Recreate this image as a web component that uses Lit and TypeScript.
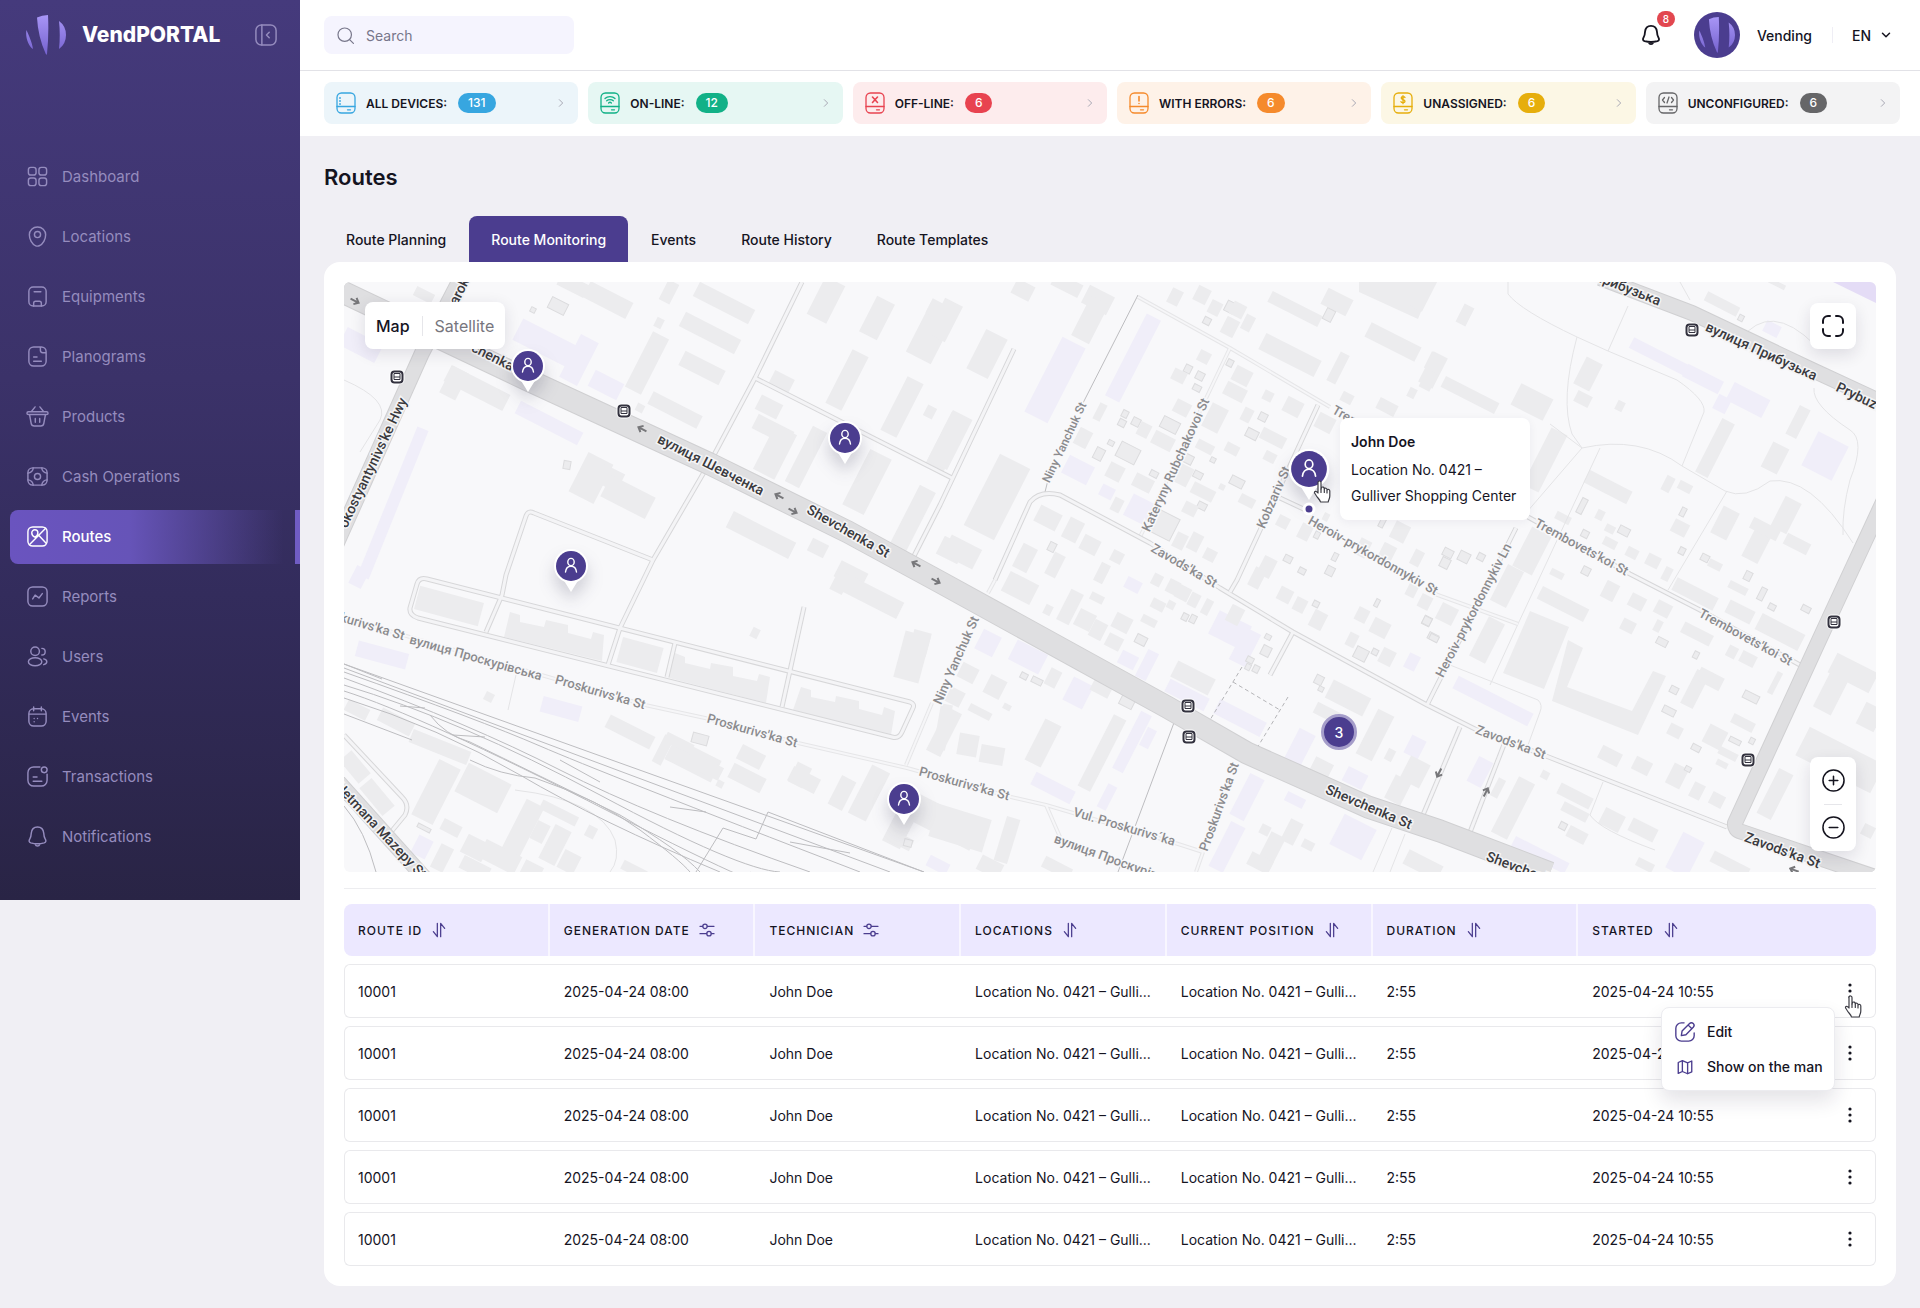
import { LitElement, html, svg, css, nothing } from "lit";
import { customElement, property, state } from "lit/decorators.js";
import { classMap } from "lit/directives/class-map.js";

const FONT = css`Inter, "Liberation Sans", sans-serif`;

const reset = css`
  *, *::before, *::after { box-sizing: border-box; }
  button, input, select { font: inherit; color: inherit; border: 0; background: none; padding: 0; margin: 0; }
  button { cursor: pointer; }
  a { color: inherit; text-decoration: none; }
  svg { display: block; flex: none; }
  .icon { fill: none; stroke: currentColor; stroke-linecap: round; stroke-linejoin: round; }
`;

/* ---------- Icons (24 unit grid) ---------- */

const ICONS: Record<string, unknown> = {
  dashboard: svg`<rect x="2.5" y="2.5" width="8" height="8" rx="2.5"/><rect x="13.5" y="2.5" width="8" height="8" rx="2.5"/><rect x="2.5" y="13.5" width="8" height="8" rx="2.5"/><rect x="13.5" y="13.5" width="8" height="8" rx="2.5"/>`,
  locations: svg`<path d="M3.5 10.2C3.5 5.5 7.3 2 12 2s8.500 3.500 8.500 8.200c0 4.600-2.700 10-6.700 11.500a5 5 0 0 1-3.600 0c-4-1.500-6.700-6.900-6.700-11.500z"/><circle cx="12" cy="10" r="3.200"/>`,
  equipments: svg`<rect x="3" y="2" width="18" height="20" rx="4.500"/><path d="M8.500 7h7M8 22v-3a2 2 0 0 1 2-2h4a2 2 0 0 1 2 2v3"/>`,
  planograms: svg`<path d="M15 2H8a5 5 0 0 0-5 5v10a5 5 0 0 0 5 5h8a5 5 0 0 0 5-5V7a5 5 0 0 0-5-5h-1zM15 2v3.500A2.500 2.500 0 0 0 17.500 8H21M8 12.500h3.500M8 17h8"/>`,
  products: svg`<path d="M2.500 7h19a1 1 0 0 1 0 3h-19a1 1 0 0 1 0-3zM3.700 10l1.700 9.200A3.300 3.300 0 0 0 8.700 22h6.600a3.300 3.300 0 0 0 3.300-2.800L20.300 10M9.700 14v4M14.300 14v4M5.500 7l4-5M18.500 7l-4-5"/>`,
  cash: svg`<rect x="2" y="3" width="20" height="18" rx="5"/><circle cx="12" cy="12" r="3.200"/><path d="M2 8.500c3 0 5.500-2.500 5.500-5.500M22 8.500c-3 0-5.500-2.500-5.500-5.500M2 15.500c3 0 5.500 2.500 5.500 5.500M22 15.500c-3 0-5.500 2.500-5.500 5.500"/>`,
  routes: svg`<rect x="2" y="2" width="20" height="20" rx="5"/><path d="M3.500 20.500l17-17M13.500 11l7.500 8M6 8.200C6 6.400 7.500 5 9.200 5s3.200 1.400 3.200 3.200c0 2-1.200 3.800-3.200 4.500C7.200 12 6 10.200 6 8.200z"/>`,
  reports: svg`<rect x="2" y="2" width="20" height="20" rx="5"/><path d="M7 14.500l2.500-4 4 3L17 9"/>`,
  users: svg`<circle cx="9.500" cy="6.500" r="4.500"/><ellipse cx="9.500" cy="17.500" rx="7" ry="4.200"/><path d="M16.500 3.500a3.500 3.500 0 0 1 0 7M18.500 14.500c2 .5 3.200 1.500 3.200 3s-1.200 2.500-3.200 3"/>`,
  events: svg`<rect x="3" y="4" width="18" height="18" rx="5"/><path d="M3.500 9.500h17M8 2v4M16 2v4M8.500 14h.01M12 14h.01M8.500 17.500h.01"/>`,
  transactions: svg`<path d="M14.500 2H8a6 6 0 0 0-6 6v8a6 6 0 0 0 6 6h8a6 6 0 0 0 6-6V9.500M7.500 12.500h4M7.500 17h9"/><circle cx="19" cy="5" r="3"/>`,
  bell: svg`<path d="M12 2C8 2 5.800 4.800 5.500 8.500 5.300 12 5 13 4 14.500c-1.300 2-.9 3.600 1 4.200 4.500 1.200 9.500 1.200 14 0 1.900-.6 2.300-2.200 1-4.200-1-1.500-1.300-2.500-1.500-6C18.200 4.800 16 2 12 2zM9.500 20c.5 1.300 1.400 2 2.500 2s2-.7 2.500-2"/>`,
  collapse: svg`<rect x="1" y="1" width="22" height="22" rx="6"/><path d="M7.500 1v22M15.500 9l-3 3 3 3"/>`,
  search: svg`<circle cx="11" cy="11" r="8.500"/><path d="M17.500 17.500L22 22"/>`,
  chevronDown: svg`<path d="M5 8.500l7 7 7-7"/>`,
  chevronRight: svg`<path d="M8 4l8 8-8 8"/>`,
  sort: svg`<path d="M9.500 2v20L3.500 14.500M14.500 22V2l6 7.500"/>`,
  filter: svg`<circle cx="9" cy="6.500" r="3.300"/><circle cx="15" cy="17.500" r="3.300"/><path d="M1.500 6.500h4M12.500 6.500h10M1.500 17.500h10M18.500 17.500h4"/>`,
  expand: svg`<path d="M2 9V7a5 5 0 0 1 5-5h2M15 2h2a5 5 0 0 1 5 5v2M22 15v2a5 5 0 0 1-5 5h-2M9 22H7a5 5 0 0 1-5-5v-2"/>`,
  plus: svg`<circle cx="12" cy="12" r="11"/><path d="M12 7.500v9M7.500 12h9"/>`,
  minus: svg`<circle cx="12" cy="12" r="11"/><path d="M7.500 12h9"/>`,
  edit: svg`<path d="M11 2H8a6 6 0 0 0-6 6v8a6 6 0 0 0 6 6h8a6 6 0 0 0 6-6v-3M8 16l.8-5L17 2.700a2.800 2.800 0 0 1 4 4L13 15zM15.500 4.500l3.800 3.800"/>`,
  map: svg`<path d="M8.500 3.500L3 6v14.500l5.500-2.500 7 3L21 18.500V4l-5.500 2.500zM8.500 3.500V18M15.500 6.500V21"/>`,
};

const icon = (name: string, size: number, stroke = 1.5) => html`
  <svg class="icon" width=${size} height=${size} viewBox="0 0 24 24" stroke-width=${stroke} aria-hidden="true">${ICONS[name]}</svg>`;

const brandMark = (size: number, id: string) => html`
  <svg width=${size} height=${size} viewBox="0 0 40 40" aria-hidden="true">
    <defs><linearGradient id=${id} x1="0" y1="0" x2="0" y2="1"><stop offset="0" stop-color="#a896f6"/><stop offset="1" stop-color="#7562cf"/></linearGradient></defs>
    <path fill="url(#${id})" d="M.5 15C2.500 20 6 27 7 34 2.500 31-1 22 .5 15zM11 2.500Q16 0 22 0q1 20-1 39-.5 1.500-1.200 0Q12 22 11 2.500zM33 6q7 5 7 14 0 9-7 14 1.500-14 0-28z"/>
  </svg>`;

const handCursor = (cls: string) => html`
  <svg class=${cls} width="20" height="24" viewBox="0 0 20 24" aria-hidden="true">
    <path d="M5 2.500c0-2 3-2 3 0V9l.5-1.500c1-1 2.800-.3 2.800 1.200.8-1 2.700-.6 2.800 1 1-.8 2.700-.3 2.700 1.300v5c0 3-1.300 3.500-1.600 6H7.500c-.5-2.500-3-4-4.300-6.500C2.500 14 1 13 1.500 12c.8-1.200 2.300-.5 3.500 1z" fill="#fff" stroke="#3c3c44" stroke-width="1.200" stroke-linejoin="round"/>
    <path d="M8 9v3.500M11.300 9v3.500M14 10v3" stroke="#3c3c44" stroke-width="1.200" stroke-linecap="round"/>
  </svg>`;

/* ---------- Side navigation ---------- */

const NAV = [
  ["Dashboard", "dashboard"], ["Locations", "locations"], ["Equipments", "equipments"], ["Planograms", "planograms"],
  ["Products", "products"], ["Cash Operations", "cash"], ["Routes", "routes"], ["Reports", "reports"],
  ["Users", "users"], ["Events", "events"], ["Transactions", "transactions"], ["Notifications", "bell"],
];

@customElement("side-nav")
export class SideNav extends LitElement {
  static styles = [reset, css`
    :host { display: block; background: linear-gradient(180deg, #453a7c 0%, #3b3269 42%, #332c5c 66%, #292445 100%); color: #958cbe; padding-bottom: 36px; }
    .brand { display: flex; align-items: center; height: 70px; padding: 0 23px 0 26px; gap: 16px; margin-bottom: 80px; }
    .name { flex: 1; color: #fff; font-size: 21px; font-weight: 800; line-height: 24px; }
    .list { list-style: none; margin: 0; padding: 0; display: flex; flex-direction: column; gap: 6px; }
    .link { display: flex; align-items: center; gap: 13px; height: 54px; margin-left: 10px; padding: 0 0 2px 16px; font-size: 15px; font-weight: 400; }
    .active { color: #fff; font-weight: 500; border-right: 5px solid #705cc4; border-radius: 8px 0 0 8px;
      background: linear-gradient(90deg, #6a54bf 0%, #6654b8 42%, rgb(102 84 184 / 0) 96%); }
  `];
  render() {
    return html`
      <div class="brand">
        ${brandMark(40, "side-mark")}
        <span class="name">VendPORTAL</span>
        <button aria-label="Collapse menu">${icon("collapse", 22, 1.6)}</button>
      </div>
      <nav><ul class="list">
        ${NAV.map(([label, name]) => html`<li>
          <a class=${classMap({ link: true, active: label === "Routes" })} href="#${name}">${icon(name, 23)}<span>${label}</span></a>
        </li>`)}
      </ul></nav>`;
  }
}

/* ---------- Top bar ---------- */

@customElement("top-bar")
export class TopBar extends LitElement {
  static styles = [reset, css`
    :host { display: flex; justify-content: space-between; align-items: center; height: 71px; padding: 0 28px 0 24px; background: #fff; border-bottom: 1px solid #e2e2e7; }
    .search { display: flex; align-items: center; gap: 11px; width: 250px; height: 38px; padding: 0 12px; border-radius: 8px; background: #f5f4fe; color: #77768a; }
    .field { flex: 1; min-width: 0; font-size: 14px; outline: 0; }
    .field::placeholder { color: #77768a; opacity: 1; }
    .right { display: flex; align-items: center; font-size: 14px; font-weight: 500; color: #15141f; }
    .bell { position: relative; margin-right: 32px; }
    .count { position: absolute; left: 17px; top: -13px; min-width: 18px; height: 16px; border-radius: 8px; background: #e2474f; color: #fff; font-size: 10px; line-height: 16px; text-align: center; }
    .avatar { display: grid; place-items: center; width: 46px; height: 46px; border-radius: 50%; background: #4b3d8f; }
    .user { margin: 0 20px 0 17px; }
    .lang { position: relative; display: flex; align-items: center; border-left: 1px solid #efeef5; padding-left: 19px; height: 16px; }
    .select { appearance: none; width: 40px; outline: 0; cursor: pointer; }
    .arrow { position: absolute; right: 0; pointer-events: none; }
  `];
  render() {
    return html`
      <label class="search">${icon("search", 19)}<input class="field" type="search" placeholder="Search" aria-label="Search" /></label>
      <div class="right">
        <button class="bell" aria-label="Notifications, 8 new">${icon("bell", 22, 2)}<span class="count">8</span></button>
        <span class="avatar">${brandMark(36, "avatar-mark")}</span>
        <span class="user">Vending</span>
        <div class="lang">
          <select class="select" aria-label="Language"><option>EN</option></select>
          <span class="arrow">${icon("chevronDown", 12, 3)}</span>
        </div>
      </div>`;
  }
}

/* ---------- Device status strip ---------- */

const GLYPHS: Record<string, unknown> = {
  all: svg`<path d="M4 6h.01M4 9h.01M4 12h.01" stroke-width="1.800"/>`,
  online: svg`<path d="M5 6.500c2.500-2.500 7.500-2.500 10 0M6.700 8.800c1.700-1.600 4.900-1.600 6.600 0M8.600 11c.8-.8 2-.8 2.800 0"/>`,
  offline: svg`<path d="M7.500 5l5 5.500M12.500 5l-5 5.500" stroke-width="1.600"/>`,
  errors: svg`<path d="M10 4.500v4.500M10 11.500h.01" stroke-width="1.600"/>`,
  unassigned: svg`<path d="M12 5.500c-.5-1-3.800-1.200-3.800.5S12 7.500 12 9.300s-3.500 1.700-4 .4M10 3.700v8"/>`,
  unconfigured: svg`<path d="M6.500 5.500L4.500 8l2 2.500M13.500 5.500l2 2.500-2 2.500M11 5l-2 6"/>`,
};

const STATUSES = [
  { id: "all", label: "All devices:", count: 131 },
  { id: "online", label: "On-line:", count: 12 },
  { id: "offline", label: "Off-line:", count: 6 },
  { id: "errors", label: "With errors:", count: 6 },
  { id: "unassigned", label: "Unassigned:", count: 6 },
  { id: "unconfigured", label: "Unconfigured:", count: 6 },
];

@customElement("status-strip")
export class StatusStrip extends LitElement {
  static styles = [reset, css`
    :host { display: grid; grid-template-columns: repeat(6, 1fr); gap: 10px; padding: 11px 20px 12px 24px; background: #fff; }
    .card { display: flex; align-items: center; height: 42px; padding: 0 12px; border-radius: 8px; background: var(--tint); color: var(--tone); }
    .label { margin: 0 11px 0 10px; color: #15141f; font-size: 12px; font-weight: 600; text-transform: uppercase; white-space: nowrap; }
    .count { padding: 0 10px; height: 20px; border-radius: 10px; background: var(--tone); color: #fff; font-size: 12px; font-weight: 500; line-height: 20px; }
    .go { margin-left: auto; color: #a9a9b5; }
    .all { --tone: #37a6e0; --tint: #ecf5fa; }
    .online { --tone: #12b187; --tint: #e6f7f3; }
    .offline { --tone: #e84350; --tint: #fdeced; }
    .errors { --tone: #f58a2c; --tint: #fef2e8; }
    .unassigned { --tone: #e6ae0c; --tint: #fcf7e5; }
    .unconfigured { --tone: #666668; --tint: #f3f3f4; }
  `];
  render() {
    return STATUSES.map((s) => html`
      <a class="card ${s.id}" href="#${s.id}">
        <svg class="icon" width="20" height="22" viewBox="0 0 20 22" stroke-width="1.300" aria-hidden="true">
          <rect x="1" y="1" width="18" height="20" rx="4.500"/><path d="M1 14.500h18M11.500 17.800h3"/>${GLYPHS[s.id]}
        </svg>
        <span class="label">${s.label}</span><span class="count">${s.count}</span>
        <span class="go">${icon("chevronRight", 10, 2.4)}</span>
      </a>`);
  }
}

/* ---------- Map ---------- */

const VIEW = { x: 344, y: 282, w: 1532, h: 590 };

type Block = number[]; // centre x, centre y, width, depth, angle (27 when absent), outlined
interface Tile { x: number; y: number; sx: number; sy: number; grey: Block[]; lilac: Block[]; shapes?: string[] }

const TILES: Tile[] = [
  { x: 320, y: 270, sx: 2.45, sy: 3,
    grey: [[705,90,48,18],[620,45,30,14],[582,108,18,12,27,1],[990,100,62,16],[955,190,62,16],[935,295,45,16],[855,65,12,22],[800,280,18,62],[870,420,55,14],[1240,90,22,42],[1365,145,20,40],[1497,190,28,56],[1515,120,20,16],[1290,330,18,60],[1425,410,18,60],[1535,520,20,60],[1115,545,24,50],[1110,480,40,16],[1190,560,16,62],[1340,635,24,62],[1450,750,18,70],[1130,340,22,18],[1100,410,24,16],[1495,425,10,12],[1080,795,70,18],[1220,835,18,14],[1545,840,24,20],[1300,915,30,18],[665,625,28,44],[710,625,24,20],[755,680,50,24],[385,355,66,18],[328,340,18,30],[605,585,7,8,10,1],[521,120,5,5,27,1],[830,160,8,10],[255,75,20,10],[785,415,8,8]],
    lilac: [[560,225,70,24],[635,270,20,48],[700,345,32,18],[560,460,70,14],[180,700,12,160,22],[100,225,40,20]] },
  { x: 320, y: 570, sx: 2.45, sy: 3,
    grey: [[315,108,66,24,15],[785,255,42,26,15],[760,487,50,14],[1345,75,70,18],[1275,40,14,20],[1450,260,26,48,15],[1470,220,18,24,15],[1065,190,8,10],[415,380,9,9],[90,420,24,12],[185,455,36,14],[295,530,62,14,22],[285,665,24,62],[400,655,48,32],[495,780,20,60],[440,860,40,20],[585,730,40,10],[540,785,14,20],[575,825,18,38],[665,785,10,12],[320,775,20,12],[380,835,24,20],[300,865,14,26],[610,875,18,20],[915,570,52,24],[840,540,10,30],[880,520,30,10],[960,600,20,14],[1055,562,26,16],[1045,625,36,16],[1185,630,30,16],[1175,615,16,22],[1280,670,16,32],[1345,670,20,54],[1520,750,80,28],[1420,770,20,40],[1530,485,16,48],[932,507,16,10,15,1],[255,775,14,4,27,1],[980,643,7,7],[520,900,20,14],[380,895,30,14],[140,680,16,36,-40],[85,590,16,30,-40],[770,900,26,10],[1420,810,26,12],[1440,820,8,7,15,1]],
    lilac: [[153,255,52,16,15],[590,418,40,16,15],[95,20,14,20],[1515,885,22,12],[250,830,16,20]],
    shapes: ["465,125 490,135 490,155 550,170 553,150 607,165 607,190 665,208 670,185 697,195 690,272 450,200",
      "870,250 895,260 895,280 955,297 958,278 1012,292 1012,317 1070,333 1075,312 1102,322 1092,400 855,325",
      "1178,350 1203,360 1203,380 1262,397 1265,378 1320,392 1320,417 1378,435 1383,412 1408,422 1400,495 1160,420"] },
  { x: 940, y: 270, sx: 3, sy: 3,
    grey: [[250,60,20,16],[380,45,30,14],[475,90,28,20],[450,150,20,44],[140,252,24,44],[15,150,20,40],[30,510,22,56],[170,680,34,80],[65,845,34,22],[705,80,12,16],[785,75,14,16],[825,115,12,14],[870,110,9,11,27,1],[895,120,14,14],[802,152,7,7,27,1],[870,170,14,18],[925,160,10,16],[1065,118,56,12],[1190,95,28,18],[1167,135,9,12,27,1],[1050,255,62,18],[1195,295,10,32],[1360,215,56,16],[1480,300,16,34],[792,260,12,12],[745,297,7,8,27,1],[780,318,8,8,27,1],[718,318,14,12],[771,353,8,6,27,1],[870,278,6,7,27,1],[905,318,18,16],[885,365,22,14],[985,378,10,10],[1058,410,18,16],[922,435,10,14],[968,440,8,8,27,1],[825,445,18,26],[727,415,16,14],[690,466,18,12,27,1],[612,480,12,14],[587,457,8,8,27,1],[556,432,6,7,27,1],[546,460,7,7,27,1],[480,425,8,18],[430,505,14,18],[512,520,6,5,27,1],[565,550,21,16,27,1],[478,553,9,12,27,1],[670,512,22,14],[745,567,10,9,27,1],[795,532,18,10],[820,571,5,5,27,1],[935,493,12,9,27,1],[1000,505,26,12],[990,562,12,10],[875,537,14,10],[525,605,16,16],[610,640,20,14],[643,612,8,6,27,1],[730,615,16,20],[775,614,9,7,27,1],[890,635,14,9,27,1],[790,665,24,12],[785,707,9,7,27,1],[920,692,16,10],[750,718,14,12],[530,705,10,14],[673,765,24,24,27,1],[720,812,12,16],[765,815,12,18],[810,855,12,12],[325,745,24,18],[400,780,16,22],[450,825,18,16],[337,830,7,9,27,1],[255,865,16,26],[345,885,12,24],[530,860,12,12],[485,910,10,20],[1030,755,12,12],[980,890,14,20],[1045,867,8,7,27,1],[1085,903,7,6,27,1],[1130,795,5,7,27,1],[1185,862,5,8,27,1],[1170,903,8,9,27,1],[1270,835,12,18],[1340,850,14,18],[1430,865,10,16],[1380,785,16,18],[1327,760,5,9,27,1],[1158,740,6,8],[1095,785,12,16],[1220,385,12,10],[1340,410,20,12],[1415,370,8,10],[1155,460,18,16],[845,650,6,6]],
    lilac: [[345,330,26,84],[580,265,16,92],[415,600,28,20],[600,720,26,24],[500,665,14,12]],
    shapes: ["1256,37 1480,37 1435,148 1256,65"] },
  { x: 940, y: 570, sx: 3, sy: 3,
    grey: [[240,55,32,22],[390,110,14,34],[435,150,18,18],[475,180,14,18],[523,215,16,14],[545,160,18,16],[325,120,8,10],[470,85,14,8],[485,15,8,14],[650,30,10,12],[653,105,14,10],[700,50,12,14],[730,70,14,14],[762,90,10,14],[800,110,8,16],[693,105,8,8],[735,140,6,7,27,1],[758,147,6,8,27,1],[628,153,16,8],[603,210,11,9,27,1],[760,325,42,18],[1035,75,14,14],[1080,105,12,14],[1127,103,6,6,27,1],[1135,150,14,18],[950,25,12,20],[885,135,14,18],[983,200,6,5,27,1],[978,243,9,10,27,1],[930,270,7,6,27,1],[947,298,6,7,27,1],[924,292,5,6,27,1],[1235,210,10,14],[1320,175,18,16],[1262,253,13,12,27,1],[1305,245,6,6,27,1],[1340,260,14,16],[1310,98,4,8,27,1],[1460,152,8,9,27,1],[1480,202,10,7,27,1],[1265,135,12,14],[1415,60,10,14],[1455,95,12,14],[1138,330,8,9,27,1],[1143,358,5,5,27,1],[1225,385,42,20],[1160,430,26,12],[1305,495,18,50],[1350,555,8,12],[1145,590,20,14],[1425,605,22,26],[1375,660,18,26],[85,310,18,16],[165,350,18,20],[252,318,7,6,27,1],[290,333,11,6,27,1],[340,325,12,18],[485,350,20,16],[562,397,14,10,27,1],[120,425,24,8],[200,410,8,6],[45,380,16,16],[10,470,12,46,10],[85,525,20,22,10],[155,555,24,18,10],[310,520,18,46],[485,550,14,80],[60,775,56,34,17],[200,810,14,46,17],[150,890,24,16],[350,895,30,12],[975,780,10,10],[1055,785,14,24],[1105,825,12,9],[992,840,16,34],[960,880,24,14],[1450,885,38,16]],
    lilac: [[145,220,20,22],[265,260,34,22],[415,370,22,26],[565,270,18,14],[620,285,12,30],[740,375,44,14],[900,445,52,16],[870,180,36,26],[915,230,18,36],[580,45,16,12],[575,515,12,64],[340,655,44,14],[1080,530,18,34],[920,680,16,46],[1245,625,22,16],[1065,690,20,10],[1240,800,36,34],[860,830,16,50],[1425,530,16,20],[500,680,10,26],[1415,275,12,16],[625,505,10,20]] },
  { x: 1420, y: 270, sx: 3, sy: 2.529,
    grey: [[135,115,11,20],[45,235,16,18],[25,280,12,18],[150,315,60,12],[335,335,36,24],[10,55,16,36],[505,262,18,30],[490,325,16,12],[600,343,8,10],[375,480,18,64],[885,450,14,60],[1135,385,12,32],[1065,475,18,28],[905,85,36,10],[963,122,5,6,27,1],[565,550,48,14],[487,598,6,16,27,1],[745,540,9,16],[795,550,14,9],[780,652,16,14],[788,612,5,9,27,1],[785,710,6,7,27,1],[613,660,11,8,27,1],[540,620,8,10],[570,655,10,8],[495,668,7,7,27,1],[570,690,14,9],[430,628,16,8],[635,715,12,10],[700,735,14,12],[740,770,8,14],[855,728,8,7,27,1],[885,745,14,8],[915,640,18,30],[1015,690,18,38],[1035,655,30,12],[1098,620,18,34],[1130,692,26,12],[985,775,7,9,27,1],[955,805,20,8],[1025,820,6,13,27,1],[1057,853,7,6,27,1],[1157,858,9,6,27,1],[430,845,52,14],[410,770,14,7],[497,762,8,8,27,1],[570,812,14,18],[650,840,16,14],[730,858,16,14],[625,900,14,12],[715,900,7,12],[725,940,11,7,27,1],[825,820,46,14],[960,865,28,14],[1080,915,48,18],[830,920,32,12],[935,965,10,12],[985,985,16,12],[828,973,5,7,27,1],[260,800,18,40],[335,710,22,44],[200,935,18,44],[133,727,11,10,27,1],[85,715,10,8,27,1],[75,742,9,10,27,1],[183,725,7,7,27,1],[80,870,18,18],[20,887,8,8,27,1],[42,930,9,6,27,1],[825,1060,14,38],[870,1035,26,14],[763,1063,8,7,27,1],[748,1115,13,7,27,1],[993,1080,16,8,27,1],[1065,1045,6,24],[765,1165,14,12],[827,1210,9,6,27,1],[945,1190,12,5,27,1],[997,1190,5,6,27,1],[885,1180,20,20],[970,1145,24,10],[925,1225,20,8],[905,1250,12,6],[570,1230,22,14],[665,1255,18,14],[770,1280,16,22],[803,1262,6,5,27,1],[830,1318,12,16],[890,1340,14,13],[575,1390,22,18],[670,1415,28,14],[465,1330,36,12],[465,1370,28,10],[428,1407,7,7,27,1],[470,1430,20,12],[280,1360,18,62],[235,1310,8,20],[375,1277,8,8],[1065,1325,16,50],[1300,1020,46,22],[1245,1050,20,58],[1350,1130,20,24],[1260,1240,84,32],[930,1505,40,12],[675,1505,18,9],[1345,1420,12,12],[1070,35,18,5]],
    lilac: [[720,220,64,12],[850,275,40,14],[985,330,40,20],[905,340,14,16],[1215,470,34,38],[220,1090,84,14],[360,1480,60,12],[795,1480,24,40],[180,1270,16,28],[1055,150,16,12]],
    shapes: ["330,862 447,903 373,1060 248,1020", "445,935 490,955 440,1055 635,1115 700,1015 738,1028 655,1175 395,1090"] },
];

const MINOR_ROADS = [
  "M802 282L755 378L714 455L653 560L620 628L608 665", "M755 378L952 478", "M1014 349L940 505L914 556",
  "M486 632L502 595L506 575L526 516Q528 510 534 513L653 560",
  "M427 579L910 702Q915 704 913 708L902 732Q899 739 892 737L418 618Q409 615 410 608L417 584Q419 577 427 579z",
  "M675 643L667 677", "M804 607L782 707",
  "M995 580L1030 502Q1040 490 1060 495L1150 543L1220 588L1293 632L1427 705L1475 729L1546 756L1727 827",
  "M344 735L402 797Q410 805 405 815L391 832", "M1318 405L1237 580L1230 592", "M1280 498L1310 512",
  "M1427 705L1516 528", "M1528 517L1630 574L1700 610L1800 665", "M1460 727L1420 822", "M1505 742L1467 840", "M1293 632L1270 675",
];
const FAINT_ROADS = [
  "M344 618L645 705L705 718L798 743L907 768L1011 797L1046 805L1175 843L1203 852", "M1203 852L1196 872", "M1237 760L1240 750",
  "M988 593L995 580M980 615L978 611M932 703L906 765", "M1138 297L1230 348L1330 407", "M1230 348L1140 537", "M1046 805L1060 837",
  "M1435 594L1518 624",
];
const PATHS = [
  "M1508 282v12Q1520 310 1577 337L1608 351L1677 380Q1706 400 1704 412L1682 466", "M1577 337Q1560 400 1572 434L1582 448L1520 520",
  "M1582 448Q1640 435 1682 466L1725 491Q1745 500 1770 481Q1810 475 1853 543", "M1814 388Q1812 405 1850 430Q1866 440 1850 480Q1842 510 1843 535",
  "M1628 306L1608 351", "M1727 491L1668 590", "M1518 624L1490 685", "M1450 665L1538 700Q1543 705 1540 712L1528 745", "M1603 782L1590 815Q1600 830 1655 850",
  "M1550 424L1582 448M1600 448L1518 624", "M515 790Q600 800 615 840Q620 860 610 872", "M344 380Q390 400 380 420L360 452", "M1690 300L1680 282M1740 340Q1770 300 1815 345",
  "M516 675L508 710", "M1392 828L1373 872M1405 834L1390 872",
];
const RAILS = [
  "M344 664L924 872", "M344 668L890 872", "M344 672Q480 720 540 746T860 872", "M344 678Q470 724 560 770T810 872", "M344 685Q460 720 600 795T780 872",
  "M344 691Q420 715 610 812T750 872", "M344 698Q440 728 520 775T720 872", "M430 715Q445 735 470 742L620 815Q680 850 700 872", "M344 714L412 740M470 760Q500 775 535 778Q600 800 640 830T690 872",
  "M344 664L382 679M400 706L425 708M453 735L485 737M560 760L600 782M670 807L706 812M790 842L850 853", "M696 872L723 828L756 839L768 812L924 872",
  "M1138 295L1083 403M1051 468L1045 492", "M1175 720L1118 872", "M344 806Q365 830 376 872",
];

type Label = [string, number, number, number, number, string?];
const LABELS: Label[] = [
  ["arok", 453, 303, 465, 279, "major"], ["okostyantynivs'ke Hwy", 342, 527, 403, 398, "major"], ["chenka", 474, 347, 512, 366, "major"],
  ["вулиця Шевченка", 661, 439, 761, 490, "major"], ["Shevchenka St", 808, 508, 889, 554, "major"], ["Shevchenka St", 1328, 789, 1410, 824, "major"],
  ["Shevchenka", 1488, 856, 1557, 882, "major"], ["Hetmana Mazepy St", 338, 784, 424, 876, "major"], ["вулиця Прибузька", 1709, 327, 1814, 375, "major"],
  ["Прибузька", 1595, 275, 1660, 301, "major"], ["Prybuz'ka", 1837, 386, 1892, 412, "major"], ["Zavods'ka St", 1747, 837, 1818, 863, "major"],
  ["Proskurivs'ka St", 314, 608, 406, 636], ["вулиця Проскурівська", 409, 638, 543, 676], ["Proskurivs'ka St", 554, 678, 647, 705],
  ["Proskurivs'ka St", 706, 717, 799, 743], ["Proskurivs'ka St", 918, 770, 1011, 796], ["Vul. Proskurivs´ka", 1074, 811, 1175, 841],
  ["вулиця Проскурівська", 1056, 838, 1183, 884], ["Niny Yanchuk St", 936, 704, 975, 616], ["Niny Yanchuk St", 1046, 479, 1081, 405, "small"],
  ["Kateryny Rubchakovoi St", 1146, 528, 1204, 401], ["Kobzariv St", 1259, 529, 1287, 465], ["Zavods'ka St", 1152, 546, 1217, 584],
  ["Trembovets'koi St", 1333, 408, 1425, 460], ["Heroiv-prykordonnykiv St", 1308, 518, 1439, 592], ["Heroiv-prykordonnykiv Ln", 1437, 679, 1509, 541],
  ["Trembovets'koi St", 1535, 521, 1629, 572], ["Trembovets'koi St", 1699, 611, 1793, 662], ["Zavods'ka St", 1475, 728, 1547, 755], ["Proskurivs'ka St", 1202, 852, 1235, 761],
];

const STOPS = [[397, 377], [624, 411], [1188, 706], [1189, 737], [1692, 330], [1834, 622], [1748, 760]];
const ARROWS = [[355, 301, 27], [642, 429, 207], [779, 496, 207], [793, 511, 27], [916, 564, 207], [936, 581, 27], [1439, 773, 117], [1486, 792, -63], [1794, 870, 200]];
const PINS = [[528, 366], [845, 438], [571, 566], [904, 799]];

const at = (x: number, y: number) => `left:${((x - VIEW.x) / VIEW.w) * 100}%;top:${((y - VIEW.y) / VIEW.h) * 100}%`;

@customElement("route-map")
export class RouteMap extends LitElement {
  @state() private layer = "Map";
  static styles = [reset, css`
    :host { display: block; position: relative; overflow: hidden; border-radius: 6px; background: #f8f8fa; aspect-ratio: 1532 / 590; font-size: 14px; color: #15141f; }
    .canvas { width: 100%; height: 100%; }
    .grey { fill: #ececee; }
    .outlined { stroke: #dcdcde; stroke-width: 1; }
    .lilac { fill: #f0eef9; }
    .line { fill: none; stroke-linejoin: round; }
    .major-edge { stroke: #d0d0d2; stroke-width: 23; }
    .major-fill { stroke: #dfdfe1; stroke-width: 21; }
    .mid-edge { stroke: #d0d0d2; stroke-width: 16; }
    .mid-fill { stroke: #dfdfe1; stroke-width: 14; }
    .minor-edge { stroke: #d7d7d9; stroke-width: 5; }
    .minor-fill { stroke: #f4f4f6; stroke-width: 3; }
    .faint-edge { stroke: #e6e6e8; stroke-width: 4; }
    .faint-fill { stroke: #f6f6f8; stroke-width: 2; }
    .path { stroke: #e4e4e6; }
    .rail { stroke: #bdbdc0; }
    .dash { stroke: #b5b5b8; stroke-dasharray: 4 3; }
    .street { font-family: Roboto, "Noto Sans", sans-serif; font-size: 13px; font-weight: 500; fill: #8b8b8e; stroke: #f8f8fa; stroke-width: 3; paint-order: stroke; text-anchor: middle; }
    .major { font-size: 14px; fill: #3a3a3e; stroke: #f4f4f5; }
    .small { font-size: 12px; }
    .arrow { fill: none; stroke: #77777a; stroke-width: 2; }
    .layers { position: absolute; left: 21px; top: 20px; display: flex; align-items: center; height: 47px; padding: 0 11px; border-radius: 8px; background: #fff; box-shadow: 0 4px 16px rgb(30 25 60 / .12); font-size: 16px; color: #77767e; }
    .layer + .layer { border-left: 1px solid #e6e6ea; margin-left: 12px; padding-left: 12px; }
    .chosen { color: #15141f; font-weight: 500; }
    .box { position: absolute; right: 20px; width: 46px; border-radius: 8px; background: #fff; box-shadow: 0 6px 16px rgb(30 25 60 / .12); display: flex; flex-direction: column; align-items: center; }
    .full { top: 21px; height: 46px; justify-content: center; }
    .zoom { bottom: 21px; height: 94px; justify-content: space-evenly; }
    .rule { width: 18px; height: 1px; background: #e6e6ea; }
    .pin { position: absolute; transform: translate(-50%, -50%); filter: drop-shadow(0 10px 8px rgb(30 25 60 / .18)); }
    .cluster { position: absolute; transform: translate(-50%, -50%); width: 36px; height: 36px; border-radius: 50%; border: 3px solid #a59dca; background: #4b3d8f; color: #fff; font-weight: 500; }
    .dot { position: absolute; transform: translate(-50%, -50%); width: 13px; height: 13px; border-radius: 50%; border: 3px solid #fff; background: #4b3d8f; }
    .tip { position: absolute; width: 190px; padding: 11px; border-radius: 8px; background: #fff; box-shadow: 0 2px 10px rgb(30 25 60 / .06); line-height: 26px; }
    .tip strong { display: block; margin-bottom: 2px; font-weight: 600; }
    .hand { position: absolute; }
  `];

  private block(b: Block, t: Tile, cls: string) {
    const [cx, cy, w, h, angle = 27, outlined] = b;
    const x = Math.round(t.x + cx / t.sx), y = Math.round(t.y + cy / t.sy);
    return svg`<rect class="${cls} ${outlined ? "outlined" : ""}" x=${x - w / 2} y=${y - h / 2} width=${w} height=${h} transform="rotate(${angle} ${x} ${y})"/>`;
  }
  private shape(points: string, t: Tile) {
    const list = points.split(" ").map((p) => { const [x, y] = p.split(",").map(Number); return `${Math.round(t.x + x / t.sx)},${Math.round(t.y + y / t.sy)}`; });
    return svg`<polygon class="grey" points=${list.join(" ")}/>`;
  }
  private lines(cls: string, ...ds: string[]) { return ds.map((d) => svg`<path class="line ${cls}" d=${d}/>`); }
  private label([text, x1, y1, x2, y2, cls = ""]: Label) {
    const x = (x1 + x2) / 2, y = (y1 + y2) / 2, a = (Math.atan2(y2 - y1, x2 - x1) * 180) / Math.PI;
    return svg`<text class="street ${cls}" x=${x} y=${y} dy="5" transform="rotate(${a.toFixed(1)} ${x} ${y})">${text}</text>`;
  }
  private pin(x: number, y: number, size: number) {
    return html`<button class="pin" style=${at(x, y)} aria-label="Technician">
      <svg width=${size} height=${size} viewBox="-26 -26 52 52" aria-hidden="true">
        <path d="M-8 13L0 26L8 13z" fill="#fff"/><circle r="17" fill="#fff"/><circle r="15" fill="#4b3d8f"/>
        <g fill="none" stroke="#fff" stroke-width="1.400" stroke-linecap="round"><ellipse cy="-4" rx="3.200" ry="3.600"/><path d="M-5.500 6C-5 1.500-2.500.2 0 .2S5 1.500 5.500 6"/></g>
      </svg></button>`;
  }

  render() {
    const shevchenka = "M330 286L528 380L710 464L848 532L940 582L1167 707L1247 753L1368 807L1440 831L1550 873";
    const mid = ["M464 272L422 353L336 545", "M1600 278L1692 313L1808 368L1890 406", "M1884 500L1833 610L1735 823Q1734 830 1742 832L1890 882", "M334 777L430 884"];
    return html`
      <svg class="canvas" viewBox="${VIEW.x} ${VIEW.y} ${VIEW.w} ${VIEW.h}" preserveAspectRatio="xMidYMid slice" role="img" aria-label="Street map">
        <polygon points="1833,282 1876,303 1876,282" fill="#e4dcf6"/>
        ${TILES.map((t) => svg`${t.lilac.map((b) => this.block(b, t, "lilac"))}${t.grey.map((b) => this.block(b, t, "grey"))}${(t.shapes ?? []).map((s) => this.shape(s, t))}`)}
        ${this.lines("path", ...PATHS)}${this.lines("rail", ...RAILS)}
        ${this.lines("dash", "M1242 667L1210 720", "M1233 682L1280 710", "M1288 697L1257 748")}
        ${this.lines("faint-edge", ...FAINT_ROADS)}${this.lines("faint-fill", ...FAINT_ROADS)}
        ${this.lines("minor-edge", ...MINOR_ROADS)}${this.lines("minor-fill", ...MINOR_ROADS)}
        ${this.lines("mid-edge", ...mid)}${this.lines("major-edge", shevchenka)}${this.lines("mid-fill", ...mid)}${this.lines("major-fill", shevchenka)}
        ${ARROWS.map(([x, y, a]) => svg`<path class="arrow" transform="translate(${x} ${y}) rotate(${a})" d="M-5 0H4M0-3.500L4 0L0 3.500"/>`)}
        ${LABELS.map((l) => this.label(l))}
        ${STOPS.map(([x, y]) => svg`<g transform="translate(${x} ${y})"><rect x="-7.500" y="-7.500" width="15" height="15" rx="5" fill="#fff"/><rect x="-5.500" y="-5.500" width="11" height="11" rx="3" fill="#fff" stroke="#33323f" stroke-width="2"/><path d="M-3-3.500h6v6h-6zM-3 0h6" fill="none" stroke="#33323f"/></g>`)}
      </svg>
      ${PINS.map(([x, y]) => this.pin(x, y, 52))}
      ${this.pin(1309, 469, 62)}
      <span class="dot" style=${at(1309, 509)}></span>
      <button class="cluster" style=${at(1339, 732)}>3</button>
      <div class="tip" role="tooltip" style=${at(1340, 418)}><strong>John Doe</strong>Location No. 0421 – Gulliver Shopping Center</div>
      <span class="hand" style=${at(1313, 480)}>${handCursor("")}</span>
      <div class="layers">
        ${["Map", "Satellite"].map((n) => html`<button class=${classMap({ layer: true, chosen: n === this.layer })} @click=${() => (this.layer = n)}>${n}</button>`)}
      </div>
      <div class="box full"><button aria-label="Full screen">${icon("expand", 24, 2)}</button></div>
      <div class="box zoom">
        <button aria-label="Zoom in">${icon("plus", 23, 1.6)}</button><span class="rule"></span><button aria-label="Zoom out">${icon("minus", 23, 1.6)}</button>
      </div>`;
  }
}

/* ---------- Routes table ---------- */

const COLUMNS = [["Route ID", "sort"], ["Generation date", "filter"], ["Technician", "filter"], ["Locations", "sort"], ["Current position", "sort"], ["Duration", "sort"], ["Started", "sort"]];
const ROUTE = ["10001", "2025-04-24 08:00", "John Doe", "Location No. 0421 – Gulli...", "Location No. 0421 – Gulli...", "2:55", "2025-04-24 10:55"];

@customElement("route-table")
export class RouteTable extends LitElement {
  @property({ attribute: false }) rows: string[][] = Array.from({ length: 5 }, () => ROUTE);
  @state() private openRow = 0;
  static styles = [reset, css`
    :host { display: block; color: #15141f; }
    .table { width: 100%; table-layout: fixed; border-collapse: separate; border-spacing: 0 8px; margin: -8px 0; font-size: 14px; }
    .actions-col { width: 92px; }
    th { height: 52px; padding: 0 14px; background: #ece8ff; text-align: left; font-size: 12px; font-weight: 500; text-transform: uppercase; letter-spacing: 1px; border-right: 2px solid #f8f6ff; }
    th:nth-last-child(-n + 2) { border-right: 0; }
    th:first-child { border-radius: 8px 0 0 8px; }
    th:last-child { border-radius: 0 8px 8px 0; }
    .head { display: flex; align-items: center; gap: 9px; white-space: nowrap; }
    .head button { color: #4b3d8f; }
    td { height: 54px; padding: 0 12px 0 14px; border: solid #e9e9ec; border-width: 1px 0; overflow: hidden; text-overflow: ellipsis; white-space: nowrap; }
    td:first-child { border-left-width: 1px; border-radius: 6px 0 0 6px; padding-left: 13px; }
    td.actions { position: relative; overflow: visible; border-right-width: 1px; border-radius: 0 6px 6px 0; padding: 0 15px; }
    .more { display: grid; place-items: center; width: 20px; height: 30px; margin-left: auto; }
    .menu { position: absolute; z-index: 1; right: 40px; top: 42px; width: 174px; padding: 6px 0; border: 1px solid #ececf0; border-radius: 8px; background: #fff; box-shadow: 0 10px 20px rgb(30 25 60 / .12); }
    .item { display: flex; align-items: center; width: 100%; height: 35px; font-weight: 500; }
    .glyph { display: grid; place-items: center; width: 45px; color: #4b3d8f; }
    .hand { position: absolute; left: 60px; top: 30px; z-index: 2; }
  `];
  render() {
    return html`<table class="table">
      <colgroup>${COLUMNS.map(() => html`<col />`)}<col class="actions-col" /></colgroup>
      <thead><tr>
        ${COLUMNS.map(([label, kind]) => html`<th scope="col"><div class="head">${label}<button aria-label="${kind} by ${label}">${icon(kind, 16, 1.9)}</button></div></th>`)}
        <th aria-label="Actions"></th>
      </tr></thead>
      <tbody>${this.rows.map((row, i) => html`<tr>
        ${row.map((cell) => html`<td>${cell}</td>`)}
        <td class="actions">
          <button class="more" aria-label="Row actions" @click=${() => (this.openRow = this.openRow === i ? -1 : i)}>
            <svg width="4" height="16" viewBox="0 0 4 16" fill="currentColor" aria-hidden="true"><circle cx="2" cy="2" r="1.600"/><circle cx="2" cy="8" r="1.600"/><circle cx="2" cy="14" r="1.600"/></svg>
          </button>
          ${this.openRow === i ? html`
            <div class="menu">
              <button class="item"><span class="glyph">${icon("edit", 22)}</span>Edit</button>
              <button class="item"><span class="glyph">${icon("map", 18, 1.8)}</span>Show on the man</button>
            </div>${handCursor("hand")}` : nothing}
        </td>
      </tr>`)}</tbody>
    </table>`;
  }
}

/* ---------- Page ---------- */

const TABS = ["Route Planning", "Route Monitoring", "Events", "Route History", "Route Templates"];

@customElement("app-root")
export class AppRoot extends LitElement {
  @state() private tab = TABS[1];
  static styles = [reset, css`
    :host { display: grid; grid-template-columns: 300px minmax(0, 1fr); align-items: start; min-height: 100vh; background: #f0eff4; font-family: ${FONT}; color: #15141f; }
    .content { padding: 26px 24px 22px; }
    .title { margin: 0 0 24px; font-size: 22px; font-weight: 600; line-height: 30px; }
    .tabs { display: flex; gap: 1px; }
    .tab { height: 46px; padding: 0 22px; border-radius: 8px 8px 0 0; font-size: 14px; font-weight: 500; }
    .on { background: #4b3d8f; color: #fff; }
    .panel { display: flex; flex-direction: column; gap: 16px; padding: 20px; border-radius: 16px; background: #fff; }
    .rule { margin: 0 0 -1px; border: 0; height: 1px; background: #ededf0; }
  `];
  render() {
    return html`
      <side-nav></side-nav>
      <div>
        <top-bar></top-bar>
        <status-strip></status-strip>
        <main class="content">
          <h1 class="title">Routes</h1>
          <div class="tabs" role="tablist">
            ${TABS.map((t) => html`<button role="tab" aria-selected=${t === this.tab} class=${classMap({ tab: true, on: t === this.tab })} @click=${() => (this.tab = t)}>${t}</button>`)}
          </div>
          <section class="panel">
            <route-map></route-map>
            <hr class="rule" />
            <route-table></route-table>
          </section>
        </main>
      </div>`;
  }
}
